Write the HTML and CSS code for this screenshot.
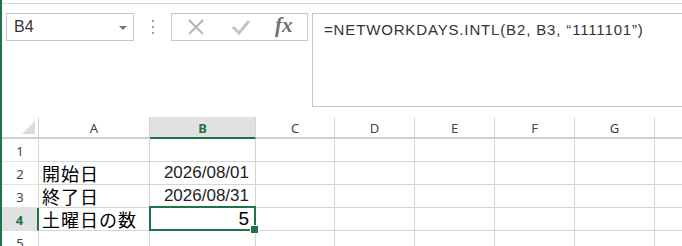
FILE: index.html
```html
<!DOCTYPE html>
<html lang="ja">
<head>
  <meta charset="UTF-8" />
  <meta name="viewport" content="width=device-width, initial-scale=1.0"/>
  <title>NETWORKDAYS.INTL</title>
  <link rel="stylesheet" href="styles.css">
</head>
<body>

  <div class="janela">
    <div class="faixa-topo"></div>

    <div class="barra-formula">
      <div class="caixa-nome">
        <span>B4</span>
        <span class="seta"></span>
      </div>

      <div class="pontos"><i></i><i></i><i></i></div>

      <div class="caixa-botoes">
        <svg class="icone" width="18" height="18" viewBox="0 0 18 18">
          <path d="M2 2 L16 16 M16 2 L2 16" stroke="#b4b4b4" stroke-width="1.8" fill="none"/>
        </svg>
        <svg class="icone" width="20" height="18" viewBox="0 0 20 18">
          <path d="M2 9 L8 15 L18 3" stroke="#c4c4c4" stroke-width="3" fill="none"/>
        </svg>
        <span class="fx">fx</span>
      </div>

      <div class="caixa-formula">=NETWORKDAYS.INTL(B2, B3, “1111101”)</div>
    </div>

    <div class="planilha">
      <div class="cab canto"><span class="triangulo"></span></div>
      <div class="cab">A</div>
      <div class="cab ativo-col">B</div>
      <div class="cab">C</div>
      <div class="cab">D</div>
      <div class="cab">E</div>
      <div class="cab">F</div>
      <div class="cab">G</div>
      <div class="cab"></div>

      <div class="num">1</div>
      <div class="cel"></div><div class="cel"></div><div class="cel"></div><div class="cel"></div>
      <div class="cel"></div><div class="cel"></div><div class="cel"></div><div class="cel"></div>

      <div class="num">2</div>
      <div class="cel texto">開始日</div>
      <div class="cel valor">2026/08/01</div>
      <div class="cel"></div><div class="cel"></div><div class="cel"></div>
      <div class="cel"></div><div class="cel"></div><div class="cel"></div>

      <div class="num">3</div>
      <div class="cel texto">終了日</div>
      <div class="cel valor">2026/08/31</div>
      <div class="cel"></div><div class="cel"></div><div class="cel"></div>
      <div class="cel"></div><div class="cel"></div><div class="cel"></div>

      <div class="num ativo-lin">4</div>
      <div class="cel texto">土曜日の数</div>
      <div class="cel valor resultado selecionada">5</div>
      <div class="cel"></div><div class="cel"></div><div class="cel"></div>
      <div class="cel"></div><div class="cel"></div><div class="cel"></div>

      <div class="num">5</div>
      <div class="cel"></div><div class="cel"></div><div class="cel"></div><div class="cel"></div>
      <div class="cel"></div><div class="cel"></div><div class="cel"></div><div class="cel"></div>
    </div>
  </div>

</body>
</html>
```

FILE: styles.css
```css
* {
  box-sizing: border-box;
}

body {
  margin: 0;
  background: #fff;
  font-family: "Liberation Sans", Arial, sans-serif;
}

.janela {
  width: 682px;
  height: 246px;
  border-left: 2px solid #217346;
  overflow: hidden;
}

.faixa-topo {
  height: 4px;
  border-bottom: 1px solid #d6d6d6;
}

/* barra de formula */
.barra-formula {
  display: flex;
  align-items: flex-start;
  padding: 9px 0 0 4px;
}

.barra-formula > * {
  flex-shrink: 0;
}

.caixa-nome {
  width: 128px;
  height: 28px;
  border: 1px solid #c6c6c6;
  display: flex;
  align-items: center;
  justify-content: space-between;
  padding: 0 6px 0 7px;
  font-size: 16px;
  color: #333;
}

.seta {
  width: 0;
  height: 0;
  border-left: 4px solid transparent;
  border-right: 4px solid transparent;
  border-top: 4px solid #777;
  margin-top: 2px;
}

.pontos {
  width: 37px;
  height: 28px;
  display: flex;
  flex-direction: column;
  align-items: center;
  justify-content: center;
  gap: 4px;
}

.pontos i {
  width: 2px;
  height: 2px;
  background: #a0a0a0;
}

.caixa-botoes {
  width: 137px;
  height: 28px;
  border: 1px solid #c6c6c6;
  display: flex;
  align-items: center;
  padding-left: 15px;
}

.icone {
  margin-right: 26px;
}

.icone + .icone {
  margin-right: 24px;
}

.fx {
  font-family: "Liberation Serif", serif;
  font-style: italic;
  font-weight: bold;
  font-size: 21px;
  color: #707070;
  margin-top: -3px;
}

.caixa-formula {
  margin-left: 4px;
  width: 400px;
  height: 94px;
  border: 1px solid #c6c6c6;
  border-right: none;
  padding: 7px 0 0 11px;
  font-size: 15px;
  letter-spacing: 0.85px;
  color: #333;
  white-space: nowrap;
}

/* grade */
.planilha {
  margin-top: 10px;
  display: grid;
  grid-template-columns: 37px 111px 106px 79px 80px 80px 80px 80px 80px;
  grid-template-rows: 22px repeat(5, 23px);
}

.cab {
  border-right: 1px solid #d4d4d4;
  border-bottom: 2px solid #cfcfcf;
  display: flex;
  align-items: center;
  justify-content: center;
  font-family: "Noto Sans", sans-serif;
  font-size: 13px;
  color: #444;
  padding-top: 1px;
}

.canto {
  position: relative;
}

.triangulo {
  position: absolute;
  right: 3px;
  bottom: 3px;
  width: 0;
  height: 0;
  border-left: 13px solid transparent;
  border-bottom: 13px solid #dcdcdc;
}

.ativo-col {
  background: #e1e1e1;
  border-bottom-color: #217346;
  color: #217346;
  font-weight: bold;
}

.num {
  border-right: 1px solid #d4d4d4;
  border-bottom: 1px solid #e2e2e2;
  display: flex;
  align-items: center;
  justify-content: center;
  font-family: "Noto Sans", sans-serif;
  font-size: 13px;
  color: #444;
  padding-top: 1px;
}

.ativo-lin {
  background: #e1e1e1;
  border-right: 2px solid #217346;
  color: #217346;
  font-weight: bold;
}

.cel {
  border-right: 1px solid #d4d4d4;
  border-bottom: 1px solid #d4d4d4;
  display: flex;
  align-items: flex-end;
  white-space: nowrap;
}

.texto {
  font-family: "Noto Sans CJK JP", sans-serif;
  font-size: 18px;
  line-height: 20px;
  letter-spacing: 1px;
  padding-left: 3px;
  padding-bottom: 1px;
  color: #000;
}

.valor {
  justify-content: flex-end;
  font-size: 17px;
  line-height: 20px;
  padding-right: 6px;
  padding-bottom: 1px;
  color: #222;
}

.resultado {
  font-size: 19px;
  color: #000;
}

.selecionada {
  position: relative;
}

.selecionada::after {
  content: "";
  position: absolute;
  top: -2px;
  left: -1px;
  right: -1px;
  bottom: -1px;
  border: 2px solid #217346;
}

.selecionada::before {
  content: "";
  position: absolute;
  right: -4px;
  bottom: -4px;
  width: 7px;
  height: 7px;
  background: #217346;
  border: 1px solid #fff;
  z-index: 1;
}
```
